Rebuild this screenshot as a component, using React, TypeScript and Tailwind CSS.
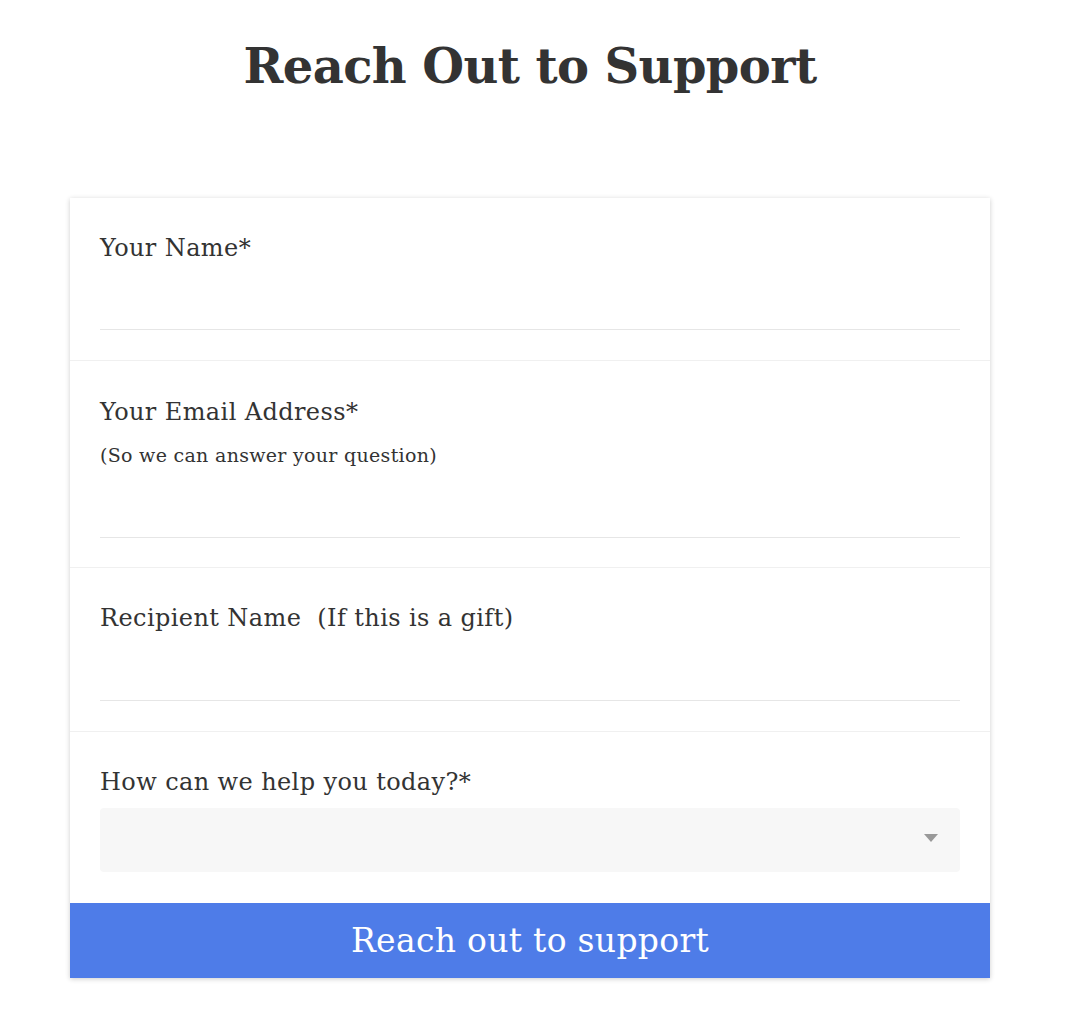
export default function App() {
  return (
    <div className="min-h-screen bg-white pr-[12px] text-[#333] font-['DejaVu_Serif',serif]">
      <h1 className="pt-[34px] text-center text-[48px] leading-[64px] font-bold tracking-[-0.6px]">Reach Out to Support</h1>

      <form className="mx-auto mt-[100px] w-[920px] bg-white shadow-[0_1px_5px_rgba(0,0,0,0.2)]">
        <div className="px-[30px] pt-[33px] pb-[30px] border-b border-[#f0f0f0]">
          <label className="block text-[24px] leading-[34px] tracking-[0.4px]">Your Name*</label>
          <div className="h-[65px] border-b border-[#e6e6e6]"></div>
        </div>

        <div className="px-[30px] pt-[34px] pb-[29px] border-b border-[#f0f0f0]">
          <label className="block text-[24px] leading-[34px] tracking-[0.4px]">Your Email Address*</label>
          <p className="mt-[14px] text-[19px] leading-[24px] tracking-[0.3px]">(So we can answer your question)</p>
          <div className="h-[71px] border-b border-[#e6e6e6]"></div>
        </div>

        <div className="px-[30px] pt-[33px] pb-[30px] border-b border-[#f0f0f0]">
          <label className="block text-[24px] leading-[34px] tracking-[0.4px]">Recipient Name&nbsp; (If this is a gift)</label>
          <div className="h-[66px] border-b border-[#e6e6e6]"></div>
        </div>

        <div className="px-[30px] pt-[33px] pb-[31px]">
          <label className="block text-[24px] leading-[34px] tracking-[0.4px]">How can we help you today?*</label>
          <div className="mt-[9px] flex h-[64px] items-center justify-end rounded-[4px] bg-[#f7f7f7] pr-[22px] pb-[4px]">
            <svg width="14" height="8" viewBox="0 0 14 8"><path d="M0 0h14L7 8z" fill="#999" /></svg>
          </div>
        </div>

        <button type="button" className="block h-[75px] w-full bg-[#4e7ce8] text-[33px] tracking-[0.3px] text-white">Reach out to support</button>
      </form>
    </div>
  );
}
